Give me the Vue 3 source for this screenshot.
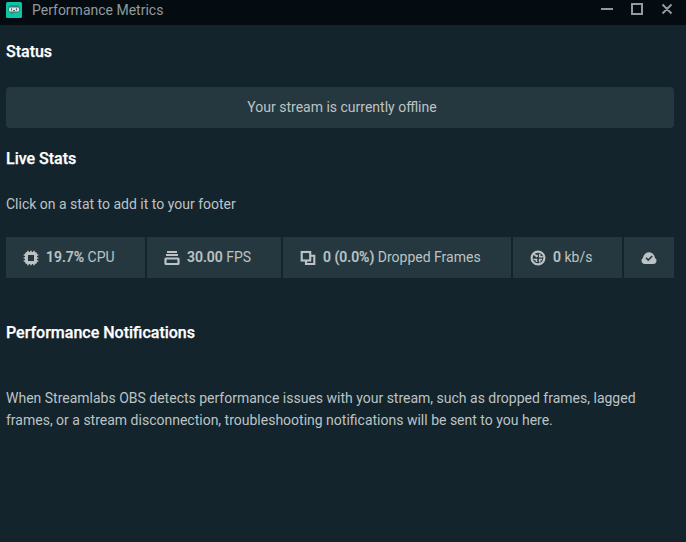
<script setup>
const stats = [
  { icon: 'cpu', value: '19.7%', label: 'CPU' },
  { icon: 'fps', value: '30.00', label: 'FPS' },
  { icon: 'frames', value: '0 (0.0%)', label: 'Dropped Frames' },
  { icon: 'bitrate', value: '0', label: 'kb/s' },
  { icon: 'cloud' },
]
</script>

<template>
  <div class="window">
    <header class="titlebar">
      <svg class="logo" width="16" height="16" viewBox="0 0 16 16">
        <rect width="16" height="16" rx="1.5" fill="#0cc5a5" />
        <path d="M5 3.2h6Q14 3.4 14 7T11 10.7H8l-2.6 2V10.7Q2 10.7 2 7T5 3.2z" fill="#337f7b" />
        <rect x="3" y="5.5" width="10" height="4" rx="1" fill="#d9e5e4" />
        <path d="M5.5 6.3v2M10.5 6.3v2M7 8.5h2" stroke="#48605f" stroke-width="1" />
      </svg>
      <span class="title">Performance Metrics</span>
      <svg class="controls" width="74" height="14" viewBox="0 0 74 14" fill="none" stroke="#929a9d" stroke-width="2">
        <path d="M1 7h12M32 2h10v10H32zM62.5 2.5l9 9M71.5 2.5l-9 9" />
      </svg>
    </header>
    <main class="content">
      <h2>Status</h2>
      <div class="status">Your stream is currently offline</div>
      <h2 class="live">Live Stats</h2>
      <p class="hint">Click on a stat to add it to your footer</p>
      <div class="stats">
        <div v-for="s in stats" :key="s.icon" class="stat" :class="s.icon">
          <svg width="16" height="16" viewBox="0 0 16 16">
            <g v-if="s.icon === 'cpu'" fill="none" stroke="currentColor">
              <rect x="3.5" y="3.5" width="9" height="9" rx=".5" stroke-width="3" />
              <path d="M5 .7v2M8 .7v2M11 .7v2M5 13.3v2M8 13.3v2M11 13.3v2M.7 5h2M.7 8h2M.7 11h2M13.3 5h2M13.3 8h2M13.3 11h2" stroke-width="1.6" />
            </g>
            <g v-else-if="s.icon === 'fps'" fill="none" stroke="currentColor">
              <path d="M3 2h10M2 5.1h12" stroke-width="2" />
              <rect x="1.5" y="8.5" width="13" height="5.5" rx=".5" stroke-width="2.2" />
            </g>
            <g v-else-if="s.icon === 'frames'" fill="none" stroke="currentColor" stroke-width="2.1">
              <rect x="1.7" y="2" width="8.5" height="8.5" />
              <path d="M10 5.7h4.3v8.3H6V10" />
            </g>
            <g v-else-if="s.icon === 'bitrate'" fill="none" stroke="currentColor">
              <circle cx="8" cy="8" r="6.4" stroke-width="2.1" />
              <path d="M4 4l3 3M7 7V4.8M9.7 4v2.8h3M3.5 9.5h3V12M9.7 12.5V9.5h2.5" stroke-width="1.6" />
            </g>
            <g v-else>
              <path d="M3.8 14A3.2 3.2 0 0 1 2 8.1C2.6 4.3 5 2.2 8 2.2S13.4 4.3 14 8.1A3.2 3.2 0 0 1 12.2 14z" fill="currentColor" />
              <path d="M5 7.8l2.2 2.2L11.2 6" fill="none" stroke="#26383f" stroke-width="1.6" />
            </g>
          </svg>
          <span v-if="s.value" class="text"><b>{{ s.value }}</b> {{ s.label }}</span>
        </div>
      </div>
      <h2 class="notifications">Performance Notifications</h2>
      <p class="description">When Streamlabs OBS detects performance issues with your stream, such as dropped frames, lagged frames, or a stream disconnection, troubleshooting notifications will be sent to you here.</p>
    </main>
  </div>
</template>

<style>
body { background: #13242d; }
</style>

<style scoped>
.window {
  box-sizing: border-box;
  height: 542px;
  overflow: hidden;
  background: #13242d;
  border-bottom: 3px solid #172129;
  color: #bdc3c5;
  font-family: Roboto, sans-serif;
  font-size: 14px;
}
.titlebar {
  box-sizing: border-box;
  height: 25px;
  padding: 2px 12px 0 6px;
  display: flex;
  align-items: flex-start;
  background: #040c11;
  color: #929a9d;
}
.logo { margin-right: 10px; }
.title { flex: 1; line-height: 17px; }
.content { padding: 16px 12px 0 6px; }
h2 {
  margin: 0;
  color: #fff;
  font-size: 16px;
  font-weight: 500;
  line-height: 22px;
  -webkit-text-stroke: .25px currentColor;
}
p { margin: 0; }
.status {
  height: 41px;
  margin-top: 24px;
  padding-left: 4px;
  border-radius: 4px;
  background: #26383f;
  line-height: 40px;
  text-align: center;
}
.live { margin-top: 20px; }
.hint { margin-top: 23px; line-height: 22px; }
.stats {
  display: grid;
  grid-template-columns: 139px 134px 228px 109px 50px;
  gap: 2px;
  height: 41px;
  margin-top: 22px;
}
.stat {
  display: flex;
  align-items: center;
  padding-left: 17px;
  background: #26383f;
}
.stat svg { flex: none; margin-right: 7px; }
.text { line-height: 20px; padding-bottom: 2px; white-space: pre; }
b { font-weight: 500; -webkit-text-stroke: .2px currentColor; }
.notifications { margin-top: 44px; }
.description { margin-top: 43px; line-height: 22px; }
</style>
